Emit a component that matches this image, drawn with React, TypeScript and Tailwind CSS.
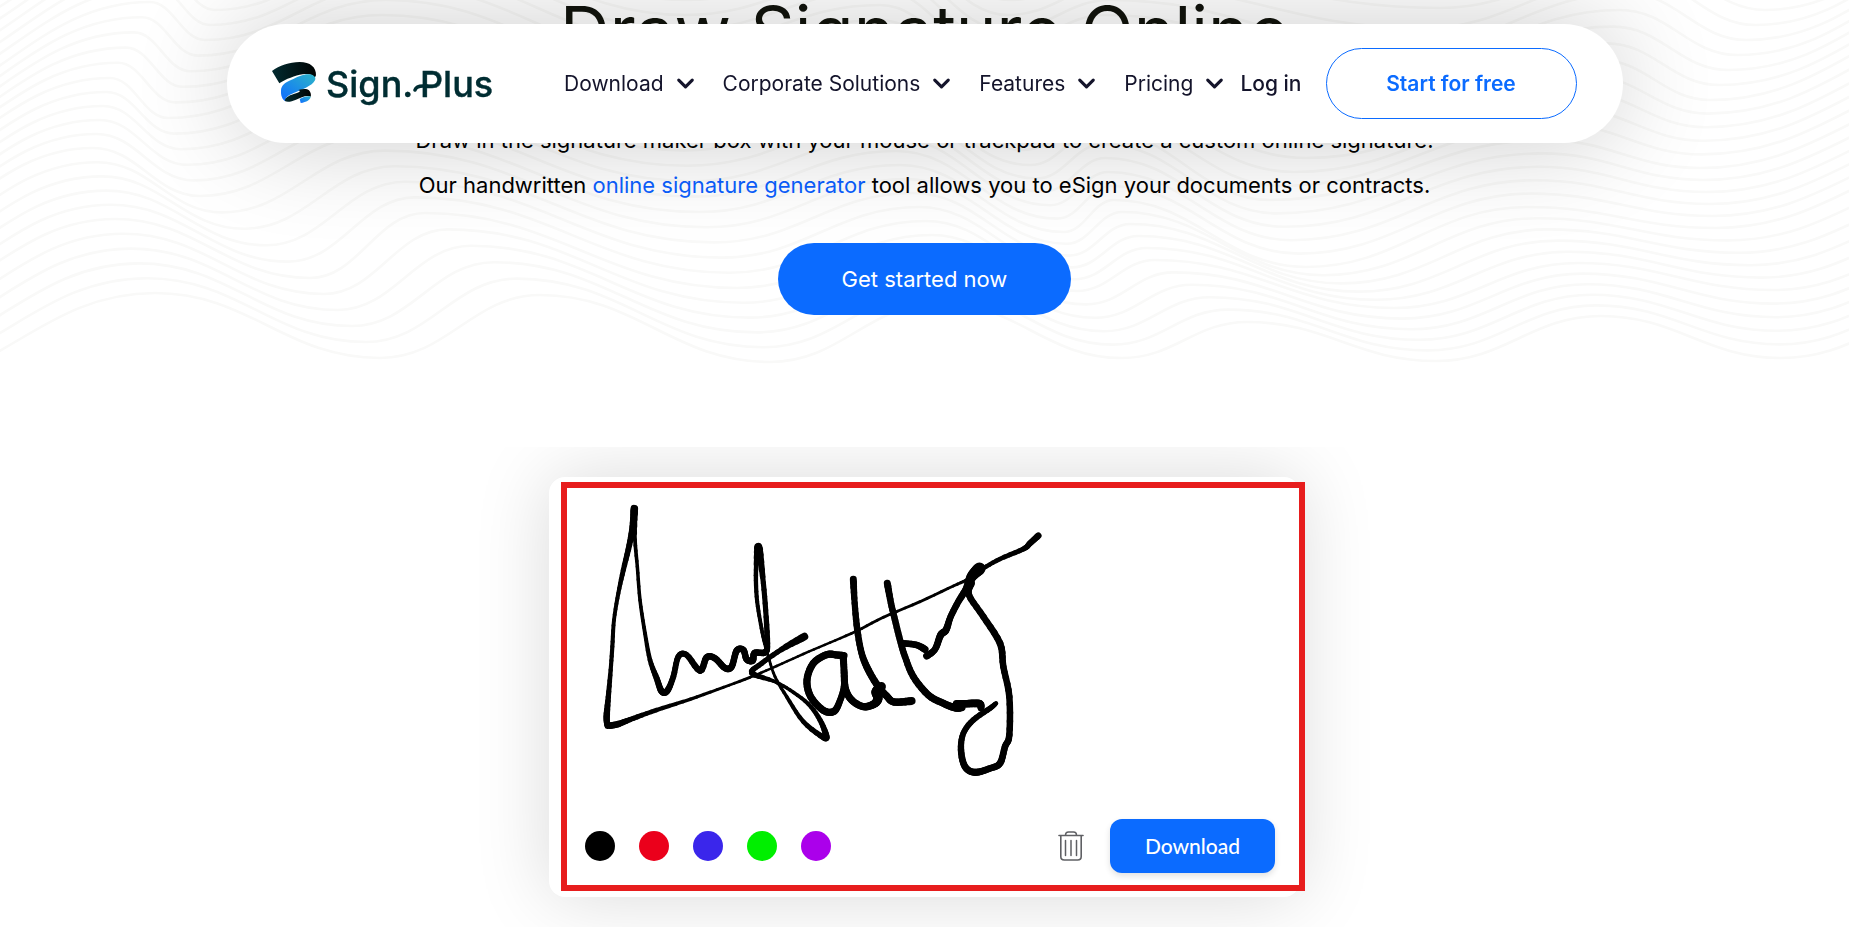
import React, { useState } from "react";
import { ChevronDown } from "lucide-react";

type Point = [number, number];
// x, y and pen width
type PenPoint = [number, number, number];

const menuItems = ["Download", "Corporate Solutions", "Features", "Pricing"];

const inkColors = [
  { name: "Black", value: "#000000", dot: "bg-black" },
  { name: "Red", value: "#eb001b", dot: "bg-[#eb001b]" },
  { name: "Blue", value: "#3a26eb", dot: "bg-[#3a26eb]" },
  { name: "Green", value: "#00ef00", dot: "bg-[#00ef00]" },
  { name: "Purple", value: "#ab00eb", dot: "bg-[#ab00eb]" },
];

// ---------------- BACKGROUND WAVES ----------------

// Each guide lists the crests and troughs of one contour line, the rest are blended in between
const waveGuides: { level: number; points: Point[] }[] = [
  { level: 0, points: [[-120, 388], [155, 293], [380, 358], [540, 295], [770, 362], [940, 303], [1122, 358], [1247, 322], [1436, 361], [1601, 316], [1781, 358], [1960, 310]] },
  { level: 5, points: [[-140, 318], [115, 219], [310, 278], [425, 213], [737, 288], [932, 235], [1077, 291], [1155, 260], [1394, 308], [1578, 263], [1773, 290], [1980, 235]] },
  { level: 10, points: [[-160, 255], [93, 148], [200, 196], [375, 135], [699, 212], [900, 165], [1064, 232], [1114, 200], [1306, 267], [1528, 207], [1716, 228], [1990, 150]] },
  { level: 15, points: [[-150, 185], [110, 78], [168, 118], [370, 60], [680, 135], [880, 95], [1030, 165], [1100, 130], [1270, 200], [1545, 140], [1700, 168], [2000, 80]] },
  { level: 20, points: [[-130, 115], [150, 2], [205, 40], [390, -15], [680, 60], [880, 20], [1000, 90], [1090, 60], [1330, 130], [1600, 60], [1710, 100], [2010, 0]] },
  { level: 26, points: [[-110, 30], [180, -88], [235, -50], [400, -105], [690, -30], [880, -70], [1010, 0], [1120, -30], [1440, 8], [1640, -40], [1765, 10], [2020, -90]] },
];

const buildWave = (level: number) => {
  const next = waveGuides.findIndex((guide) => guide.level >= level);
  const to = waveGuides[Math.max(next, 1)];
  const from = waveGuides[Math.max(next, 1) - 1];
  const t = (level - from.level) / (to.level - from.level);
  const points = from.points.map(([x, y], i): Point => [
    x + (to.points[i][0] - x) * t,
    y + (to.points[i][1] - y) * t,
  ]);

  return points.reduce((path, [x, y], i) => {
    if (i === 0) return `M${x} ${y}`;
    const [px, py] = points[i - 1];
    const bend = (x - px) * 0.42;
    return `${path}C${px + bend} ${py} ${x - bend} ${y} ${x} ${y}`;
  }, "");
};

const waves = Array.from({ length: 27 }, (_, level) => buildWave(level));

const WaveBackground: React.FC = () => (
  <svg
    className="absolute inset-x-0 top-0 h-[376px] w-full"
    viewBox="0 0 1849 376"
    preserveAspectRatio="xMidYMin slice"
    fill="none"
    stroke="#f9f9f8"
    strokeWidth="2.6"
    aria-hidden="true"
  >
    {waves.map((path, i) => (
      <path key={i} d={path} />
    ))}
  </svg>
);

// ---------------- SIGNATURE ----------------

const penStrokes: PenPoint[][] = [
  [
    [133, 56, 22], [128, 110, 18], [118, 165, 16], [100, 240, 14], [85, 310, 11], [72, 390, 10], [67, 470, 11],
    [62, 540, 11], [55, 620, 14], [50, 680, 18], [52, 708, 16],
  ],
  [
    [60, 707, 18], [85, 702, 18], [130, 685, 14], [200, 660, 12], [300, 628, 9], [400, 592, 7], [480, 562, 7],
    [560, 528, 6], [640, 492, 6], [720, 458, 6], [800, 423, 7], [880, 382, 7], [990, 335, 7], [1090, 288, 7],
    [1135, 267, 8], [1180, 235, 11], [1230, 207, 12], [1300, 177, 14], [1320, 160, 16], [1345, 137, 18],
  ],
  [
    [133, 56, 22], [135, 150, 10], [142, 230, 9], [150, 330, 9], [165, 430, 10], [180, 510, 12], [200, 565, 16],
    [215, 604, 18], [232, 602, 18], [250, 560, 16], [265, 500, 16], [290, 495, 16], [330, 542, 18], [350, 502, 18],
    [375, 505, 18], [405, 534, 18], [425, 530, 18], [440, 482, 18], [460, 480, 18], [470, 508, 18], [488, 512, 18],
    [494, 489, 18], [525, 487, 18], [532, 460, 16], [527, 360, 14], [518, 260, 14], [505, 170, 22], [498, 240, 12],
    [500, 320, 11], [510, 390, 10], [522, 450, 10], [535, 500, 7], [555, 560, 7], [590, 620, 9], [640, 695, 12],
    [700, 742, 16], [708, 735, 18], [690, 690, 14], [655, 642, 11], [600, 600, 9], [550, 573, 9], [486, 549, 16],
    [515, 520, 14], [575, 478, 14], [643, 440, 22],
  ],
  [
    [762, 497, 20], [740, 495, 20], [710, 494, 20], [670, 520, 20], [651, 570, 20], [662, 620, 20], [700, 661, 20],
    [732, 664, 20], [750, 632, 18], [762, 590, 18], [762, 540, 18], [760, 505, 20],
  ],
  [
    [762, 540, 18], [766, 595, 20], [785, 630, 20], [820, 650, 20], [852, 642, 22], [864, 625, 26], [858, 605, 26],
    [874, 590, 26],
  ],
  [
    [790, 268, 20], [794, 340, 17], [802, 420, 18], [815, 490, 18], [835, 540, 20], [865, 590, 20], [890, 618, 20],
    [912, 636, 20], [965, 633, 22],
  ],
  [
    [892, 280, 20], [903, 340, 18], [915, 390, 18], [930, 450, 18], [945, 500, 18], [970, 560, 19], [1015, 615, 20],
    [1060, 640, 20], [1095, 653, 21], [1115, 652, 22],
  ],
  [[1100, 642, 22], [1130, 641, 21], [1168, 641, 22], [1173, 655, 18]],
  [[940, 460, 18], [980, 465, 18], [1005, 478, 20]],
  [
    [1010, 498, 20], [1035, 478, 18], [1052, 435, 20], [1068, 420, 20], [1082, 380, 18], [1105, 335, 18],
    [1130, 295, 20], [1145, 260, 28], [1168, 236, 36],
  ],
  [
    [1145, 280, 18], [1137, 315, 18], [1180, 380, 18], [1230, 460, 19], [1240, 530, 18], [1258, 620, 18],
    [1258, 735, 18], [1245, 770, 18], [1230, 820, 19], [1200, 835, 18], [1155, 847, 20], [1125, 830, 19],
    [1113, 780, 18], [1120, 730, 16], [1150, 690, 16], [1200, 655, 15], [1218, 640, 12],
  ],
];

const spline = (a: number, b: number, c: number, d: number, t: number) =>
  0.5 * (2 * b + (c - a) * t + (2 * a - 5 * b + 4 * c - d) * t * t + (3 * b - a - 3 * c + d) * t * t * t);

const STEPS = 5;

const samplePoints = (points: PenPoint[]) => {
  const samples: PenPoint[] = [];
  for (let i = 0; i < points.length - 1; i++) {
    const a = points[Math.max(i - 1, 0)];
    const b = points[i];
    const c = points[i + 1];
    const d = points[Math.min(i + 2, points.length - 1)];
    for (let s = 0; s < STEPS; s++) {
      const t = s / STEPS;
      samples.push([
        spline(a[0], b[0], c[0], d[0], t),
        spline(a[1], b[1], c[1], d[1], t),
        b[2] + (c[2] - b[2]) * t,
      ]);
    }
  }
  samples.push(points[points.length - 1]);
  return samples;
};

const Signature: React.FC<{ color: string }> = ({ color }) => (
  <svg
    className="h-[300px] w-[470px]"
    viewBox="0 0 1410 900"
    stroke={color}
    strokeLinecap="round"
    role="img"
    aria-label="Signature"
  >
    {penStrokes.map((stroke, i) => {
      const samples = samplePoints(stroke);
      return (
        <g key={i}>
          {samples.slice(1).map(([x, y, w], j) => (
            <line key={j} x1={samples[j][0]} y1={samples[j][1]} x2={x} y2={y} strokeWidth={w + 1.5} />
          ))}
        </g>
      );
    })}
  </svg>
);

// ---------------- ICONS ----------------

const Logo: React.FC = () => (
  <svg className="h-[51px] w-[222px]" viewBox="0 0 222 51" role="img" aria-label="Sign.Plus">
    <defs>
      <linearGradient id="ribbonDark" x1="0" y1="0" x2="1" y2="0">
        <stop offset="0" stopColor="#022b30" />
        <stop offset="1" stopColor="#000303" />
      </linearGradient>
      <linearGradient id="ribbonBlue" x1="1" y1="0" x2="0.1" y2="1">
        <stop offset="0" stopColor="#2cb5c8" />
        <stop offset="1" stopColor="#0f6fff" />
      </linearGradient>
    </defs>
    <g transform="translate(0 2) scale(0.3333)">
      <path
        d="M3 33C25 17 55 6 86 6C118 6 136 22 135 46L131 54C127 43 112 40 95 43C72 47 45 57 25 70Z"
        fill="url(#ribbonDark)"
      />
      <path
        d="M30 91C31 76 42 67 60 60C82 50 99 41 115 43C130 45 136 52 132 61C124 78 92 89 68 99C51 106 41 114 43 124C34 119 29 107 30 91Z"
        fill="url(#ribbonBlue)"
      />
      <path
        d="M82 90C94 86 108 85 114 91C120 97 121 106 119 110C108 104 90 112 75 119C62 125 48 127 42 123C40 114 53 107 68 102C82 97 93 95 82 90Z"
        fill="url(#ribbonDark)"
      />
      <path d="M86 117C97 111 110 106 119 110C119 119 106 126 89 129Z" fill="url(#ribbonBlue)" />
    </g>
    <g fill="#002d32" stroke="#002d32" strokeWidth="0.4" fontFamily="Inter, sans-serif" fontSize="36" fontWeight="500">
      <text x="55" y="39">
        Sign.
      </text>
      <text x="149" y="39">
        Plus
      </text>
    </g>
    <path d="M144 32C145 29 148 28 152 28H156" fill="none" stroke="#002d32" strokeWidth="3.6" strokeLinecap="round" />
  </svg>
);

const TrashIcon: React.FC = () => (
  <svg className="h-[30px] w-[26px]" viewBox="0 0 26 30" fill="none" stroke="#5f6064" aria-hidden="true">
    <path d="M1 4.5H25" strokeWidth="1.6" strokeLinecap="round" />
    <path d="M7.5 4.2C7.5 2 8.5 1 10.5 1H15.5C17.5 1 18.5 2 18.5 4.2" strokeWidth="1.5" />
    <path d="M2.8 4.5V25.5Q2.8 29 6.3 29H19.7Q23.2 29 23.2 25.5V4.5" strokeWidth="1.6" />
    <path d="M7.5 9.5V24.5M13 9.5V24.5M18.5 9.5V24.5" strokeWidth="1.5" strokeLinecap="round" />
  </svg>
);

// ---------------- SECTIONS ----------------

const Header: React.FC = () => (
  <header className="fixed inset-x-0 top-6 z-50 px-6">
    <div className="mx-auto flex h-[119px] max-w-[1396px] items-center rounded-full bg-white pl-11 pr-[46px] text-[21px] text-[#14142b] shadow-[0_0_100px_rgba(0,0,0,0.2)]">
      <a href="#home" className="shrink-0">
        <Logo />
      </a>
      <nav className="ml-auto flex items-center gap-6" aria-label="Main">
        {menuItems.map((item) => (
          <button key={item} type="button" className="flex items-center gap-2 whitespace-nowrap">
            {item}
            <ChevronDown size={27} strokeWidth={2.8} aria-hidden="true" />
          </button>
        ))}
      </nav>
      <a href="#login" className="ml-3 whitespace-nowrap font-medium">
        Log in
      </a>
      <a
        href="#signup"
        className="ml-6 flex h-[71px] w-[251px] shrink-0 items-center justify-center rounded-full border border-[#0b6bff] font-semibold text-[#0b6bff]"
      >
        Start for free
      </a>
    </div>
  </header>
);

const Hero: React.FC = () => (
  <section className="relative h-[447px] text-center">
    <WaveBackground />
    <div className="relative flex flex-col items-center">
      <h1 className="-mt-[18px] text-[69px] leading-[98px] text-[#11130c]">Draw Signature Online</h1>
      <p className="mt-[38px] text-[22px] leading-[45px] text-black">
        Draw in the signature maker box with your mouse or trackpad to create a custom online signature.
        <br />
        Our handwritten{" "}
        <a href="#generator" className="text-[#0b5fff]">
          online signature generator
        </a>{" "}
        tool allows you to eSign your documents or contracts.
      </p>
      <a
        href="#start"
        className="mt-[35px] flex h-[72px] w-[293px] items-center justify-center rounded-full bg-[#0b6bff] text-[22px] text-white"
      >
        Get started now
      </a>
    </div>
  </section>
);

const SignaturePad: React.FC = () => {
  const [color, setColor] = useState(inkColors[0].value);
  const [isEmpty, setIsEmpty] = useState(false);

  return (
    <section className="overflow-hidden px-6 py-[30px]">
      <div className="relative mx-auto flex h-[420px] max-w-[751px] flex-col justify-between rounded-2xl bg-white pb-6 pl-9 pr-[25px] pt-[13px] shadow-[0_0_75px_rgba(0,0,0,0.15)]">
        <div className="h-[300px] pl-[5px]">{!isEmpty && <Signature color={color} />}</div>

        <div className="flex items-center">
          <div className="flex gap-6">
            {inkColors.map((ink) => (
              <button
                key={ink.name}
                type="button"
                aria-label={ink.name}
                onClick={() => setColor(ink.value)}
                className={`size-[30px] rounded-full ${ink.dot}`}
              />
            ))}
          </div>
          <button type="button" aria-label="Clear" onClick={() => setIsEmpty(true)} className="ml-auto">
            <TrashIcon />
          </button>
          <button
            type="button"
            className="ml-[26px] h-[54px] w-[165px] rounded-xl bg-[#0b6bff] font-['Lato',sans-serif] text-[21px] font-medium text-white shadow-[0_3px_6px_rgba(0,0,0,0.12)]"
          >
            Download
          </button>
        </div>

        {/* highlight frame around the pad */}
        <div className="pointer-events-none absolute -right-[5px] bottom-1.5 left-3 top-[5px] border-6 border-[#e71d1d]" />
      </div>
    </section>
  );
};

const App: React.FC = () => {
  return (
    <div className="min-h-screen bg-white font-['Inter',sans-serif]">
      <Header />
      <main>
        <Hero />
        <SignaturePad />
      </main>
    </div>
  );
};

export default App;
